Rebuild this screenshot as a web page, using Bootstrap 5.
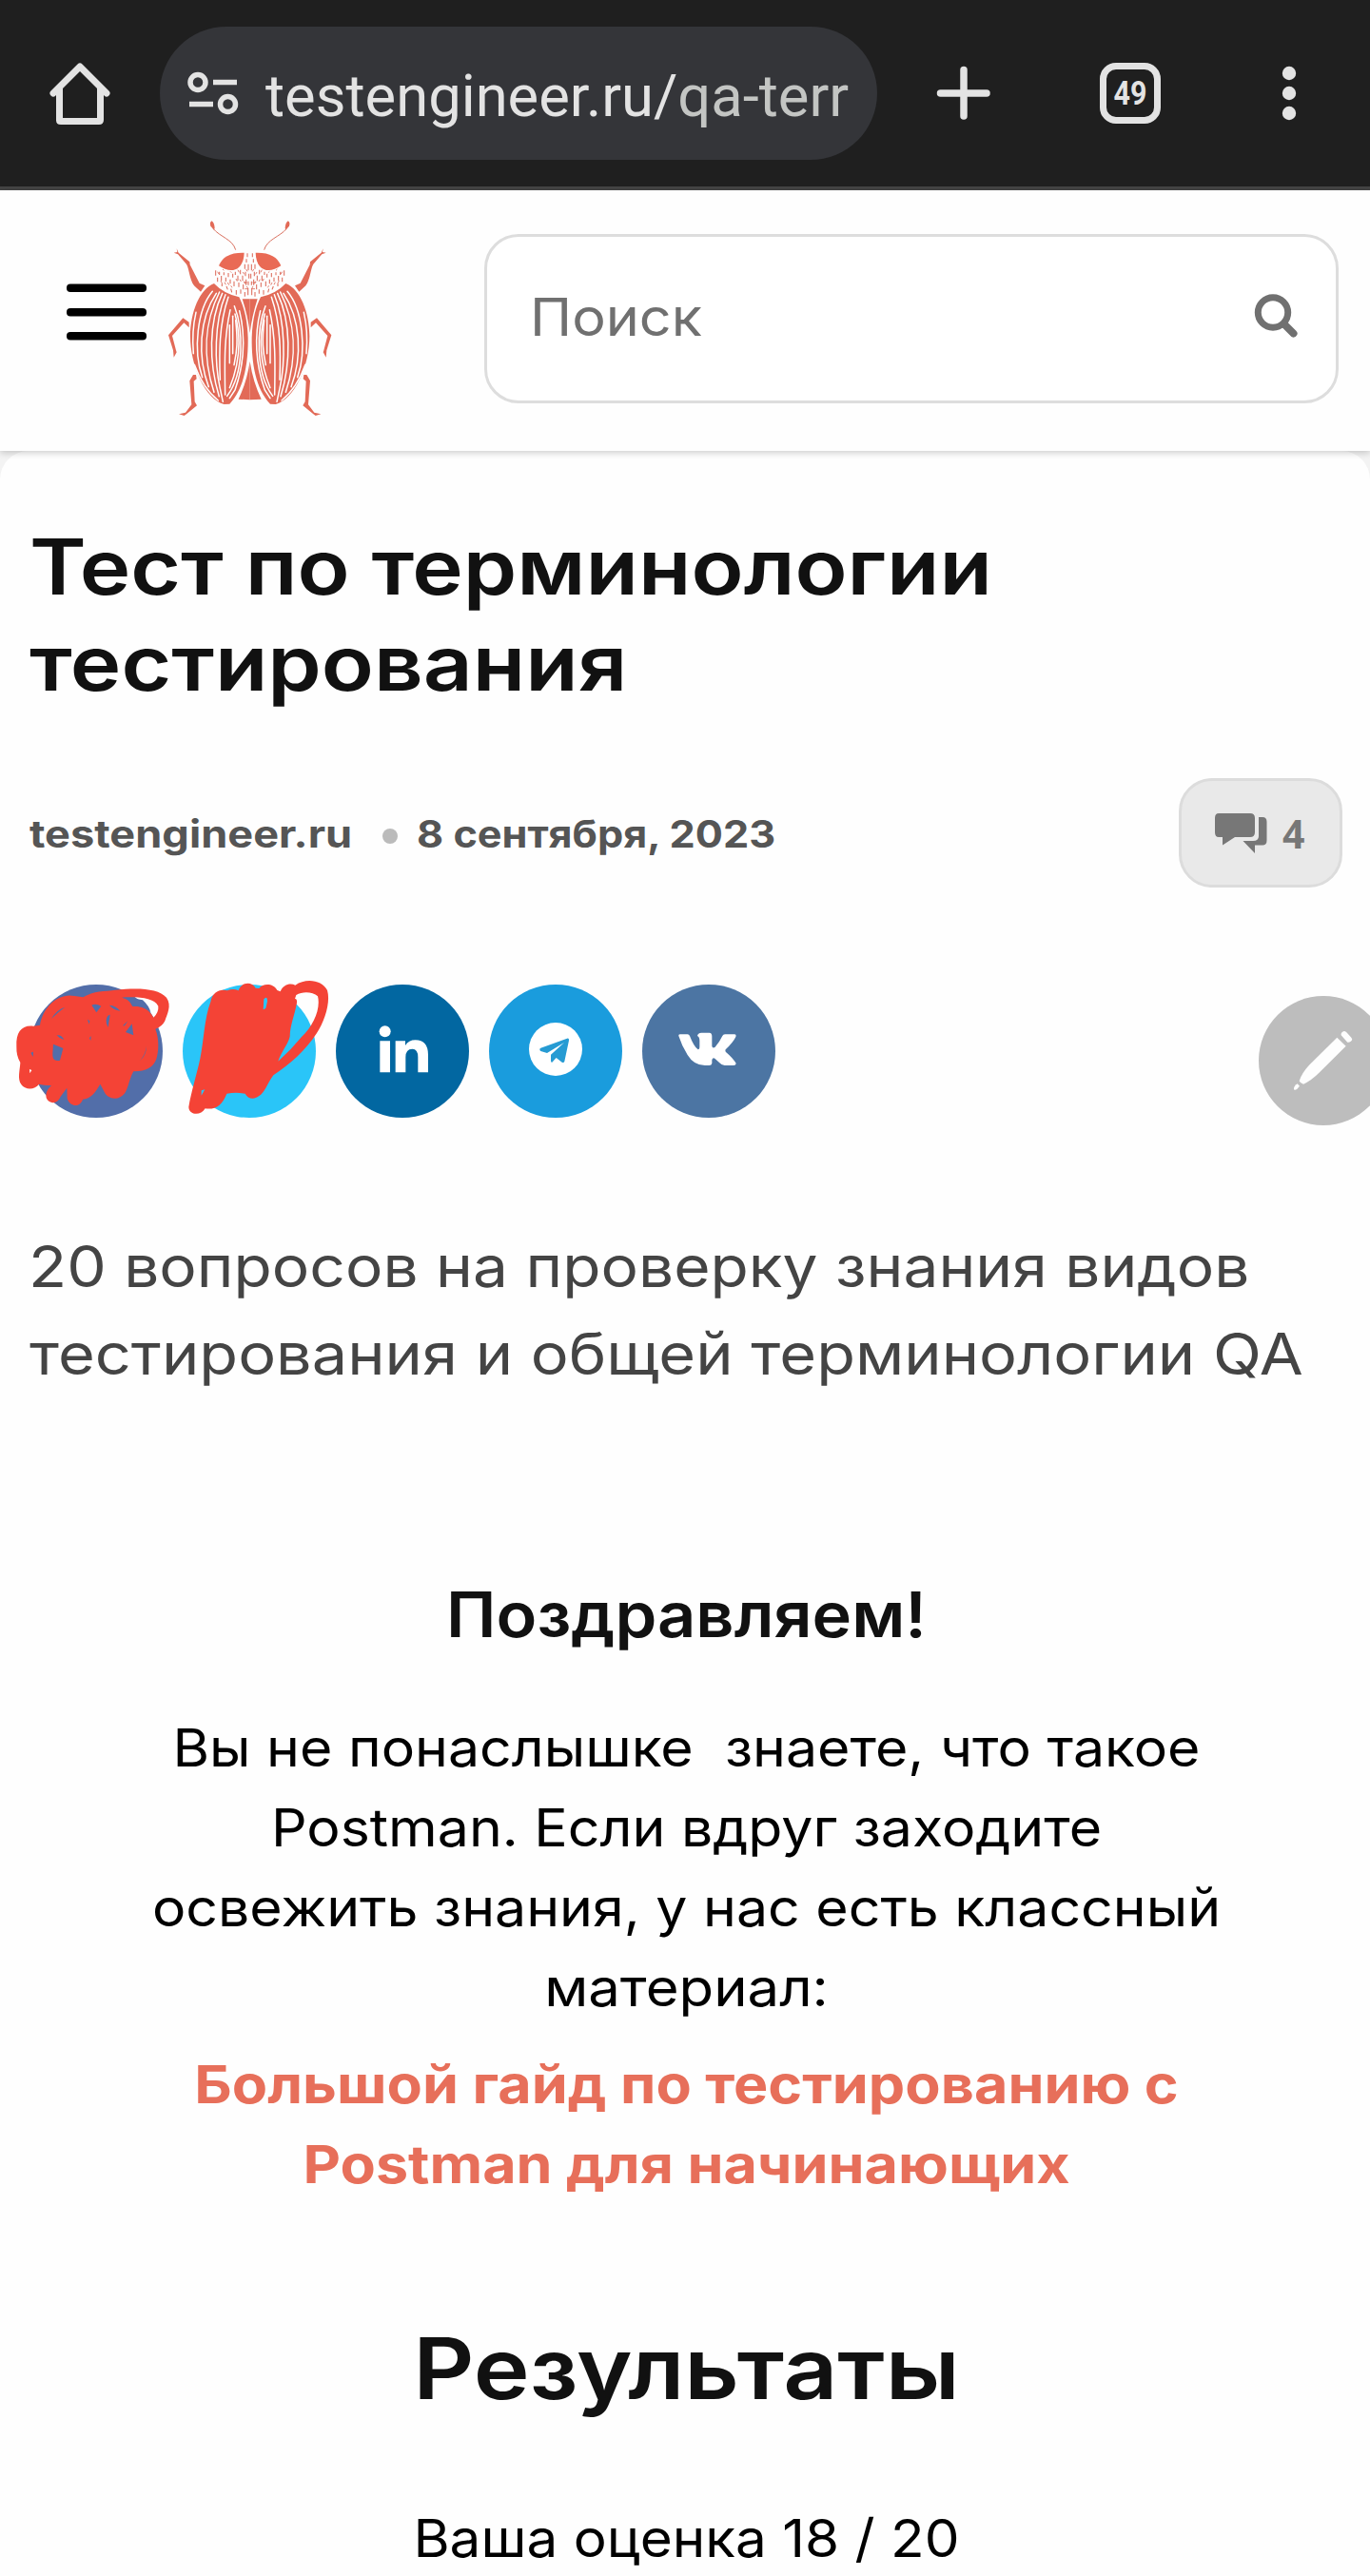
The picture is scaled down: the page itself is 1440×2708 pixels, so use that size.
<!DOCTYPE html>
<html lang="ru">
<head>
<meta charset="utf-8">
<meta name="viewport" content="width=device-width, initial-scale=1">
<title>Тест по терминологии тестирования</title>
<link href="https://cdn.jsdelivr.net/npm/bootstrap@5.3.0/dist/css/bootstrap.min.css" rel="stylesheet">
<style>
  body { font-family: Inter, "Open Sans", sans-serif; color: #111; background: #fefefe; }
  .screen { width: 1440px; height: 2708px; }

  /* wide setting of the text face: --sx is the horizontal stretch of a line */
  .line { display: block; white-space: nowrap; transform: scaleX(var(--sx, 1)); }
  .from-start .line, .from-start.line { transform-origin: 0 50%; }

  .browser-bar { height: 200px; background: #1f1f1f; border-bottom: 4px solid #444; color: #e3e3e3; }
  .home-icon { margin-left: 48px; }
  .omnibox { width: 754px; height: 140px; margin-left: 47px; background: #343539; padding-left: 25px; }
  .url { font: 400 61.5px/80px Roboto, sans-serif; width: 618px; margin: 5px 0 0 26px; }
  .url-path { color: #c3c5c3; }
  .plus-icon { margin-left: 59px; }
  .tab-count { width: 64px; height: 64px; margin-left: 111px; border: 7px solid #e3e3e3; border-radius: 17px; font: 700 35px/51px Roboto, sans-serif; --sx: .87; }
  .dots-icon { margin-left: 127px; }

  .site-header { height: 274px; background: #fefefe; box-shadow: 0 2px 7px rgba(0,0,0,.2); position: relative; z-index: 1; }
  .menu-icon { margin: 96px 0 0 70px; }
  .beetle { margin: 25px 0 0 16px; }
  .search-box { width: 898px; height: 178px; margin: 46px 0 0 149px; border: 3px solid #ddd; border-radius: 36px; background: #fff; padding: 0 38px 0 45px; }
  .search-label { font-size: 55.5px; color: #707070; --sx: 1.07; margin-top: -4px; }
  .search-box svg { margin-top: -6px; }

  .sheet-back { background: #f3f3f3; }
  .sheet { background: #fefefe; border-radius: 30px 30px 0 0; height: 2234px; padding: 71px 29px 0 31px; }
  .page-title { font-size: 80.5px; line-height: 101px; font-weight: 600; margin: 0 0 70px; --sx: 1.125; }
  .meta { height: 117px; color: #555; font-weight: 700; font-size: 39.5px; }
  .author { width: 340px; --sx: 1.143; margin-top: 4px; }
  .sep { width: 16px; height: 16px; background: #bbb; margin: 7px 20px 0 31px; }
  .date { --sx: 1.095; margin-top: 4px; }
  .comments { width: 172px; height: 115px; border: 3px solid #dcdcdc; border-radius: 35px; background: #e9e9e9; color: #777; font: 700 41px/50px "Open Sans", sans-serif; }
  .comments svg { margin: 0 16px 0 34px; }
  .share { margin-top: 101px; gap: 21px; }
  .share-btn { width: 140px; height: 140px; }
  .share-fb { background: #526ea9; }
  .share-tw { background: #2ac5f8; }
  .share-in { background: #0267a1; }
  .share-tg { background: #1a9cdd; }
  .share-vk { background: #4c75a3; }
  .scribble { left: -31px; top: -25px; pointer-events: none; }
  .edit-fab { width: 136px; height: 136px; left: 1323px; top: 1047px; background: #bdbdbd; z-index: 2; }
  .intro { font-size: 60.5px; line-height: 92px; color: #444; margin: 110px 0 189px; }
  .intro .line { --sx: 1.088; margin-left: -1px; }
  .intro .line + .line { --sx: 1.1015; margin-left: 0; }
  .result { width: 1381px; }
  .congrats { font-size: 65.5px; line-height: 80px; font-weight: 600; --sx: 1.074; margin: 0 0 57px; }
  .verdict { font-size: 55.5px; line-height: 84px; color: #000; margin-bottom: 18px; --sx: 1.063; }
  .verdict .line:last-child { --sx: 1.078; }
  .guide { font-size: 55.5px; line-height: 84px; font-weight: 700; color: #e76f5a; margin-bottom: 118px; text-decoration: none; --sx: 1.1; }
  .results-title { font-size: 89.5px; line-height: 110px; font-weight: 600; --sx: 1.113; margin-bottom: 88px; }
  .score { font-size: 55.5px; line-height: 69px; color: #000; --sx: 1.053; }
</style>
</head>
<body>
<div class="screen position-relative overflow-hidden">

  <div class="browser-bar d-flex align-items-center">
    <svg class="home-icon flex-shrink-0" width="73" height="73" viewBox="0 0 73 73" fill="none" stroke="#e3e3e3" stroke-width="7" stroke-linejoin="round" stroke-linecap="round"><path d="M8 36 36 8 64 36"/><path d="M14.500 31V64.500Q14.500 65.500 16 65.500H56Q57.500 65.500 57.500 64V31"/></svg>
    <div class="omnibox rounded-pill d-flex align-items-center">
      <svg width="60" height="50" viewBox="0 0 60 50" fill="none" stroke="#e3e3e3"><circle cx="15" cy="13.500" r="8" stroke-width="5.500"/><path d="M31 13.500H56M6 36.500H31" stroke-width="5.500"/><circle cx="46.500" cy="36.500" r="8" stroke-width="5.500"/></svg>
      <div class="url overflow-hidden text-nowrap">testengineer.ru/<span class="url-path">qa-terr</span></div>
    </div>
    <svg class="plus-icon" width="64" height="64" viewBox="0 0 64 64" stroke="#e3e3e3" stroke-width="7.500" stroke-linecap="round"><path d="M7.500 32H56M32 7.500V56"/></svg>
    <div class="tab-count text-center"><span class="line">49</span></div>
    <svg class="dots-icon" width="16" height="60" viewBox="0 0 16 60" fill="#e3e3e3"><circle cx="8" cy="9" r="7.200"/><circle cx="8" cy="30" r="7.200"/><circle cx="8" cy="51" r="7.200"/></svg>
  </div>

  <header class="site-header d-flex align-items-start">
    <svg class="menu-icon" width="84" height="64" viewBox="0 0 84 64"><g><rect y="2.500" width="84" height="8.500" rx="4"/><rect y="28" width="84" height="8.500" rx="4"/><rect y="53" width="84" height="8.500" rx="4"/></g></svg>
    <svg class="beetle" width="190" height="220" viewBox="0 0 570 660">
      <defs>
        <g id="half" fill="#e26a57">
          <path d="M158 22Q150 26 154 38L165 50 167 44Q166 28 158 22Z"/>
          <path d="M163 47C184 72 224 80 233 113" fill="none" stroke="#d9705f" stroke-width="3"/>
          <path d="M38 122 49 120 47 109 53 122 88 151 89 160 119 218 136 226 123 245 102 226C86 202 88 176 78 158L51 127Z"/>
          <path d="M86 341V358L70 343 33 384 45 430 47 436 38 452 36 430 21 382 67 328Z"/>
          <path d="M108 507 110 520 101 527 104 592 111 604 78 631 71 636 54 631 75 626 94 601 88 526 99 507Z"/>
          <path d="M260 122Q196 120 180 163C218 190 258 180 260 122Z" fill="#e96a55"/>
          <path d="M165 219C120 235 90 310 90 385C90 480 138 585 197 600L214 599C260 550 273 470 272 390C270 330 258 290 244 262Q195 251 165 219Z"/>
          <path d="M254 268H278V375Q271 320 254 268Z"/>
          <path d="M278 465Q268 530 242 584L278 586Z"/>
          <g fill="none" stroke="#fff" stroke-width="4.500" stroke-linecap="round">
            <path d="M160 244C112 300 98 430 128 515"/>
            <path d="M172 250C118 330 112 450 148 545"/>
            <path d="M182 246C135 340 128 450 165 562"/>
            <path d="M191 250C148 340 148 470 181 575"/>
            <path d="M201 254C165 340 166 470 184 550L193 592"/>
            <path d="M210 262C180 350 181 440 184 523"/>
            <path d="M216 302C197 390 198 460 200 570"/>
            <path d="M229 290C257 360 262 500 206 574"/>
            <path d="M231 315C251 390 246 470 214 548"/>
            <path d="M233 335C240 400 238 430 228 476"/>
            <path d="M224 322V440"/>
            <path d="M214 350V470"/>
            <path d="M103 475Q130 550 178 588"/>
            <path d="M108 310Q94 370 100 440"/>
            <path d="M245 305Q275 430 231 555L214 581"/>
          </g>
          <g fill="none" stroke="#dd6d5d" stroke-width="3.200">
            <path d="M170 178v16M176 200v14M182 182v10M188 195v15M190 218v10M196 184v9M202 200v13M204 228l4 10M210 186v13M216 206v14M218 236l3 11M224 188v12M228 212v16M232 182v10M235 240v14M240 194v16M243 216v14M248 176v14M249 238v13M255 194v17M257 222v16M262 158v15M264 182v14M266 206v18M262 246v14M270 124v12M267 142v11M273 158v20M275 188v15M273 212v12M272 234v22"/>
            <path d="M176 182l4 7M186 210l4 8M198 215l4 8M208 216l4 8M218 226l4 6M234 204l4 8M246 206l4 7M260 212l4 8M268 228l4 7M192 174l4 4M240 176l4 8M256 183l4 7M266 174l4 7M216 181l4 4M262 236l10 0M258 216l12 0" stroke-width="2.600"/>
          </g>
        </g>
      </defs>
      <use href="#half"/><use href="#half" transform="translate(556 0) scale(-1 1)"/>
    </svg>
    <div class="search-box d-flex align-items-center justify-content-between">
      <span class="search-label line from-start">Поиск</span>
      <svg width="50" height="50" viewBox="0 0 50 50" fill="none" stroke="#707070"><circle cx="22" cy="21.500" r="15.700" stroke-width="7"/><path d="M34 34 43.500 43.500" stroke-width="8" stroke-linecap="round"/></svg>
    </div>
  </header>

  <div class="sheet-back">
  <main class="sheet">
    <h1 class="page-title from-start"><span class="line">Тест по терминологии</span><span class="line">тестирования</span></h1>

    <div class="meta d-flex align-items-center">
      <span class="author line from-start">testengineer.ru</span>
      <span class="sep rounded-circle"></span>
      <span class="date line from-start">8 сентября, 2023</span>
      <div class="comments ms-auto d-flex align-items-center">
        <svg width="56" height="44" viewBox="0 0 56 44" fill="#777"><path d="M5 1H38Q43 1 43 6V21Q43 26 38 26H22L9 34.500V26H5Q1 26 1 21V6Q1 1 5 1Z"/><path d="M47 5H51Q55.500 5 55.500 10V29.500Q55.500 34.500 51 34.500H43V43L30.500 30H41Q47 30 47 25Z"/></svg>
        <span>4</span>
      </div>
    </div>

    <div class="share d-flex position-relative">
      <a class="share-btn share-fb rounded-circle"></a>
      <a class="share-btn share-tw rounded-circle"></a>
      <a class="share-btn share-in rounded-circle"><svg width="140" height="140" viewBox="0 0 420 420" fill="#fff"><circle cx="155" cy="148" r="18"/><path d="M139 178H171V277H139ZM188 178H219V192Q229 175 251 175Q291 175 291 222V277H259V229Q259 203 241 203Q220 203 220 229V277H188Z"/></svg></a>
      <a class="share-btn share-tg rounded-circle"><svg width="140" height="140" viewBox="0 0 420 420"><circle cx="210" cy="204" r="84" fill="#fff"/><path d="M160 205Q159 202 163 200L246 170Q253 168 252 176L238 242Q236 248 230 245L212 231 199 245Q195 247 195 240V221L237 183 183 216 163 210Q160 208 160 205Z" fill="#269bd3"/></svg></a>
      <a class="share-btn share-vk rounded-circle"><svg width="140" height="140" viewBox="0 0 420 420" fill="#fff"><path d="M115 162Q114 157 120 157H143Q148 157 150 162Q163 196 176 205Q181 205 181 195V178Q181 165 174 162Q175 153 187 152H212Q220 153 220 163V194Q222 203 230 197Q244 181 253 162Q255 157 261 157H290Q298 157 295 165Q287 182 263 205Q261 209 264 213Q285 231 295 247Q298 254 288 255H260Q251 255 244 247L229 233Q222 229 220 238V248Q219 255 211 255H198Q163 255 143 222Q124 191 115 162Z"/></svg></a>
      <svg class="scribble position-absolute" width="420" height="190" viewBox="0 0 1260 570">
        <path fill="#f44336" fill-rule="evenodd" d="M52 270C50 225 68 202 105 206L126 203C135 145 185 100 235 111L262 115C295 94 330 97 365 92C435 84 500 87 525 116C543 141 526 170 520 190Q511 208 490 215C502 245 501 285 493 310C484 337 457 350 421 349C407 374 406 398 394 417C375 443 339 438 328 412L316 389C300 417 286 435 261 437C252 464 221 461 212 434L211 401 190 430C181 454 153 452 146 432C142 413 155 401 162 393Q137 393 123 389C110 408 79 408 67 390C54 373 63 344 64 321Q51 300 52 270ZM385 116Q407 119 418 143C453 142 472 155 484 179Q501 162 499 143C485 116 435 113 385 116ZM162 183Q179 154 205 146Q185 160 162 183ZM168 263 199 276 189 314Q163 320 166 290ZM179 235Q194 232 202 249Q188 246 179 235ZM289 140 304 163 319 143Q302 134 289 140ZM335 188Q337 171 347 170L341 210Q334 199 335 188ZM345 140Q365 141 379 158Q357 155 345 140ZM396 225 416 199 421 235ZM462 269Q462 298 441 315Q459 295 462 269ZM93 342 100 345 94 355ZM97 290 105 287 104 303ZM276 185 283 190 281 200ZM282 244 287 237 286 252ZM387 205 403 190 393 205Z"/>
        <path fill="#526ea9" d="M385 116Q407 119 418 143C445 142 464 150 476 165Q471 143 450 124Q420 115 385 116Z"/>
        <path fill="#f44336" fill-rule="evenodd" d="M664 130C670 97 694 88 717 94Q735 86 752 94C759 69 793 63 806 86L817 87C829 71 862 70 874 93L884 97C893 75 915 69 931 77C965 53 1016 61 1032 93C1043 130 1024 190 999 228C963 284 915 325 862 361C843 386 835 417 816 427C800 440 780 434 773 419Q745 414 715 419C701 455 681 470 647 466C631 492 595 485 595 461C603 413 620 360 631 309C643 252 644 182 664 130ZM934 108C955 96 986 98 1002 112C1012 151 988 205 951 240Q918 281 877 317C888 285 909 261 914 239C915 202 929 173 936 133Q937 119 930 120ZM832 121Q843 108 843 128L838 150 830 154ZM635 409 646 406 635 425Z"/>
      </svg>
    </div>

    <div class="intro from-start"><span class="line">20 вопросов на проверку знания видов</span><span class="line">тестирования и общей терминологии QA</span></div>

    <section class="result text-center">
      <h3 class="congrats"><span class="line">Поздравляем!</span></h3>
      <div class="verdict">
        <span class="line">Вы не понаслышке&nbsp; знаете, что такое</span>
        <span class="line">Postman. Если вдруг заходите</span>
        <span class="line">освежить знания, у нас есть классный</span>
        <span class="line">материал:</span>
      </div>
      <a class="guide d-block"><span class="line">Большой гайд по тестированию с</span><span class="line">Postman для начинающих</span></a>
      <h2 class="results-title"><span class="line">Результаты</span></h2>
      <div class="score"><span class="line">Ваша оценка 18 / 20</span></div>
    </section>
  </main>
  </div>

  <div class="edit-fab position-absolute rounded-circle">
    <svg width="136" height="136" viewBox="369 742 408 408" fill="#fefefe"><path d="M616 873 644 900 561 983Q534 1010 510 1020Q500 1018 497 1010Q504 986 528 960Z"/><path d="M491 1019 498 1026Q491 1037 482 1039Q478 1035 481 1029Q485 1022 491 1019Z"/><path d="M629 866Q627 857 638 853Q642 853 646 857L661 873Q666 878 662 883Q656 890 649 888Z"/></svg>
  </div>
</div>
<script src="https://cdn.jsdelivr.net/npm/bootstrap@5.3.0/dist/js/bootstrap.bundle.min.js"></script>
</body>
</html>
